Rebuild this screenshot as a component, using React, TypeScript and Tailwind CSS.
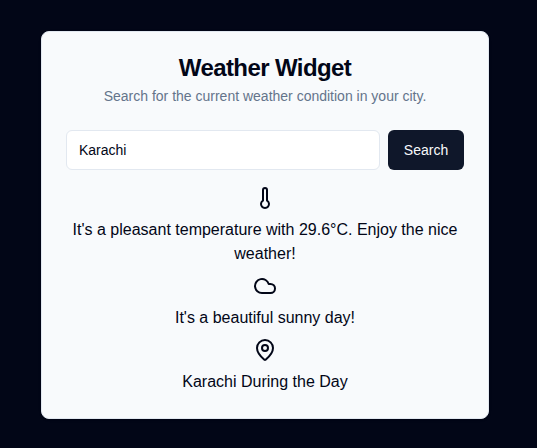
import React from "react";
import { Thermometer, Cloud, MapPin } from "lucide-react";

export default function App() {
  return (
    <div className="flex h-screen w-full items-center justify-center overflow-hidden bg-[#020617] pt-0.5 pr-[7px] font-['Liberation_Sans',Arial,sans-serif] text-[#020617]">
      <div className="h-[388px] w-[448px] rounded-lg border border-[#e2e8f0] bg-[#f8fafc] text-center shadow-sm">
        <div className="flex flex-col gap-1.5 p-6">
          <h1 className="text-2xl leading-6 font-bold tracking-tight">Weather Widget</h1>
          <p className="text-sm text-[#64748b]">Search for the current weather condition in your city.</p>
        </div>
        <div className="px-6 pb-6">
          <form className="flex items-center gap-2" onSubmit={(e) => e.preventDefault()}>
            <input
              type="text"
              defaultValue="Karachi"
              className="h-10 min-w-0 flex-1 rounded-md border border-[#e2e8f0] bg-white px-3 py-2 text-sm outline-none"
            />
            <button type="submit" className="h-10 w-[76px] rounded-md bg-[#0f172a] text-sm font-medium text-[#f8fafc]">
              Search
            </button>
          </form>
          <div className="mt-4 grid gap-2">
            <div className="flex flex-col items-center gap-2">
              <Thermometer size={24} />
              <div>It's a pleasant temperature with 29.6°C. Enjoy the nice weather!</div>
            </div>
            <div className="flex flex-col items-center gap-2">
              <Cloud size={24} />
              <div>It's a beautiful sunny day!</div>
            </div>
            <div className="flex flex-col items-center gap-2">
              <MapPin size={24} />
              <div>Karachi During the Day</div>
            </div>
          </div>
        </div>
      </div>
    </div>
  );
}
